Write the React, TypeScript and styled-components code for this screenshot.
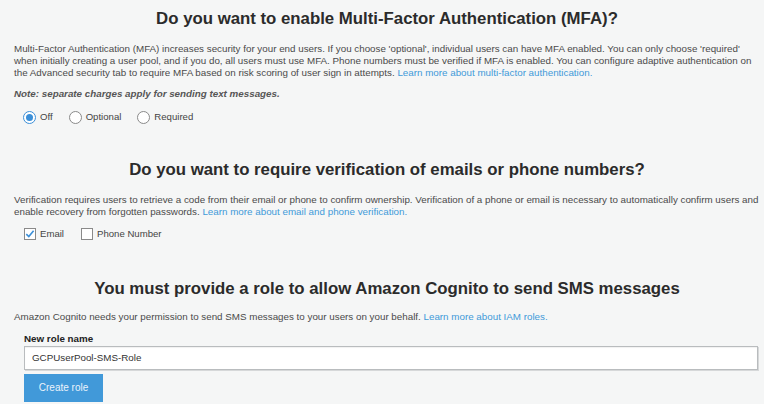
import React from "react";
import styled, { createGlobalStyle } from "styled-components";

const Global = createGlobalStyle`
  html, body { margin: 0; padding: 0; background: #f5f6f6; }
  body { font-family: "Liberation Sans", Arial, sans-serif; color: #444; }
`;

const Page = styled.div`
  width: 764px;
  height: 404px;
  overflow: hidden;
  box-sizing: border-box;
  padding: 8px 4px 0 14px;
`;

const Section = styled.section<{ $gap?: number }>`
  margin-bottom: ${(p) => p.$gap ?? 0}px;
`;

const Heading = styled.h2`
  margin: 0;
  font-size: 16.8px;
  line-height: 22px;
  font-weight: bold;
  color: #2b2b2b;
  text-align: center;
`;

const Para = styled.p<{ $top?: number }>`
  margin: ${(p) => p.$top ?? 10}px 0 0;
  font-size: 9.8px;
  line-height: 12.1px;
  color: #4a4a4a;
`;

const Link = styled.a`
  color: #3f9ad9;
  text-decoration: none;
`;

const Note = styled.p`
  margin: 8px 0 0;
  font-size: 9.8px;
  line-height: 13px;
  font-weight: bold;
  font-style: italic;
  color: #555;
`;

const OptionRow = styled.div<{ $top?: number; $gap?: number }>`
  display: flex;
  align-items: center;
  gap: ${(p) => p.$gap ?? 16}px;
  margin: ${(p) => p.$top ?? 8}px 0 0 ${(p) => (p.$gap ? 10 : 9)}px;
`;

const Option = styled.label`
  display: flex;
  align-items: center;
  gap: 4px;
  font-size: 9.6px;
  line-height: 14px;
  color: #444;
`;

const Radio = styled.span<{ $checked?: boolean }>`
  width: 11px;
  height: 11px;
  border-radius: 50%;
  border: 1px solid ${(p) => (p.$checked ? "#3b8fd8" : "#8a8a8a")};
  background: #fff;
  display: flex;
  align-items: center;
  justify-content: center;
  &::after {
    content: "";
    width: 7px;
    height: 7px;
    border-radius: 50%;
    background: ${(p) => (p.$checked ? "#3b8fd8" : "transparent")};
  }
`;

const Box = styled.span`
  width: 10px;
  height: 10px;
  border: 1px solid #8a8a8a;
  background: #fff;
  display: flex;
  align-items: center;
  justify-content: center;
`;

const Label = styled.div`
  margin-top: 8px;
  margin-left: 10px;
  font-size: 9.8px;
  line-height: 13px;
  font-weight: bold;
  color: #222;
`;

const Input = styled.input`
  display: block;
  box-sizing: border-box;
  margin: 1px 0 0 10px;
  width: 734px;
  height: 24px;
  padding: 0 7px;
  border: 1px solid #b9bcbe;
  box-shadow: inset 0 1px 1px rgba(0, 0, 0, 0.06), 1px 1px 0 #d6d8d9;
  background: #fff;
  font-family: "Liberation Sans", Arial, sans-serif;
  font-size: 9.8px;
  color: #333;
  outline: none;
`;

const Button = styled.button`
  display: block;
  margin: 4px 0 0 10px;
  width: 79px;
  height: 28px;
  border: none;
  background: #4199d9;
  color: #eaf3fb;
  font-family: "Liberation Sans", Arial, sans-serif;
  font-size: 10px;
  padding: 0;
`;

const Check = () => (
  <svg width="10" height="10" viewBox="0 0 10 10">
    <path d="M1.3 5.2 L3.8 7.6 L8.6 1.8" fill="none" stroke="#3b8fd8" strokeWidth="1.6" />
  </svg>
);

export default function App() {
  return (
    <Page>
      <Global />
      <Section $gap={35}>
        <Heading>Do you want to enable Multi-Factor Authentication (MFA)?</Heading>
        <Para $top={13}>
          Multi-Factor Authentication (MFA) increases security for your end users. If you choose 'optional', individual users can have MFA enabled. You can only choose 'required' when initially creating a user pool, and if you do, all users must use MFA. Phone numbers must be verified if MFA is enabled. You can configure adaptive authentication on the Advanced security tab to require MFA based on risk scoring of user sign in attempts.{" "}
          <Link>Learn more about multi-factor authentication.</Link>
        </Para>
        <Note>Note: separate charges apply for sending text messages.</Note>
        <OptionRow $top={10}>
          <Option>
            <Radio $checked />
            Off
          </Option>
          <Option>
            <Radio />
            Optional
          </Option>
          <Option>
            <Radio />
            Required
          </Option>
        </OptionRow>
      </Section>
      <Section $gap={37}>
        <Heading>Do you want to require verification of emails or phone numbers?</Heading>
        <Para $top={13}>
          Verification requires users to retrieve a code from their email or phone to confirm ownership. Verification of a phone or email is necessary to automatically confirm users and enable recovery from forgotten passwords.{" "}
          <Link>Learn more about email and phone verification.</Link>
        </Para>
        <OptionRow $top={9} $gap={17}>
          <Option>
            <Box>
              <Check />
            </Box>
            Email
          </Option>
          <Option>
            <Box />
            Phone Number
          </Option>
        </OptionRow>
      </Section>
      <Section>
        <Heading>You must provide a role to allow Amazon Cognito to send SMS messages</Heading>
        <Para $top={11}>
          Amazon Cognito needs your permission to send SMS messages to your users on your behalf.{" "}
          <Link>Learn more about IAM roles.</Link>
        </Para>
        <Label>New role name</Label>
        <Input defaultValue="GCPUserPool-SMS-Role" />
        <Button>Create role</Button>
      </Section>
    </Page>
  );
}
